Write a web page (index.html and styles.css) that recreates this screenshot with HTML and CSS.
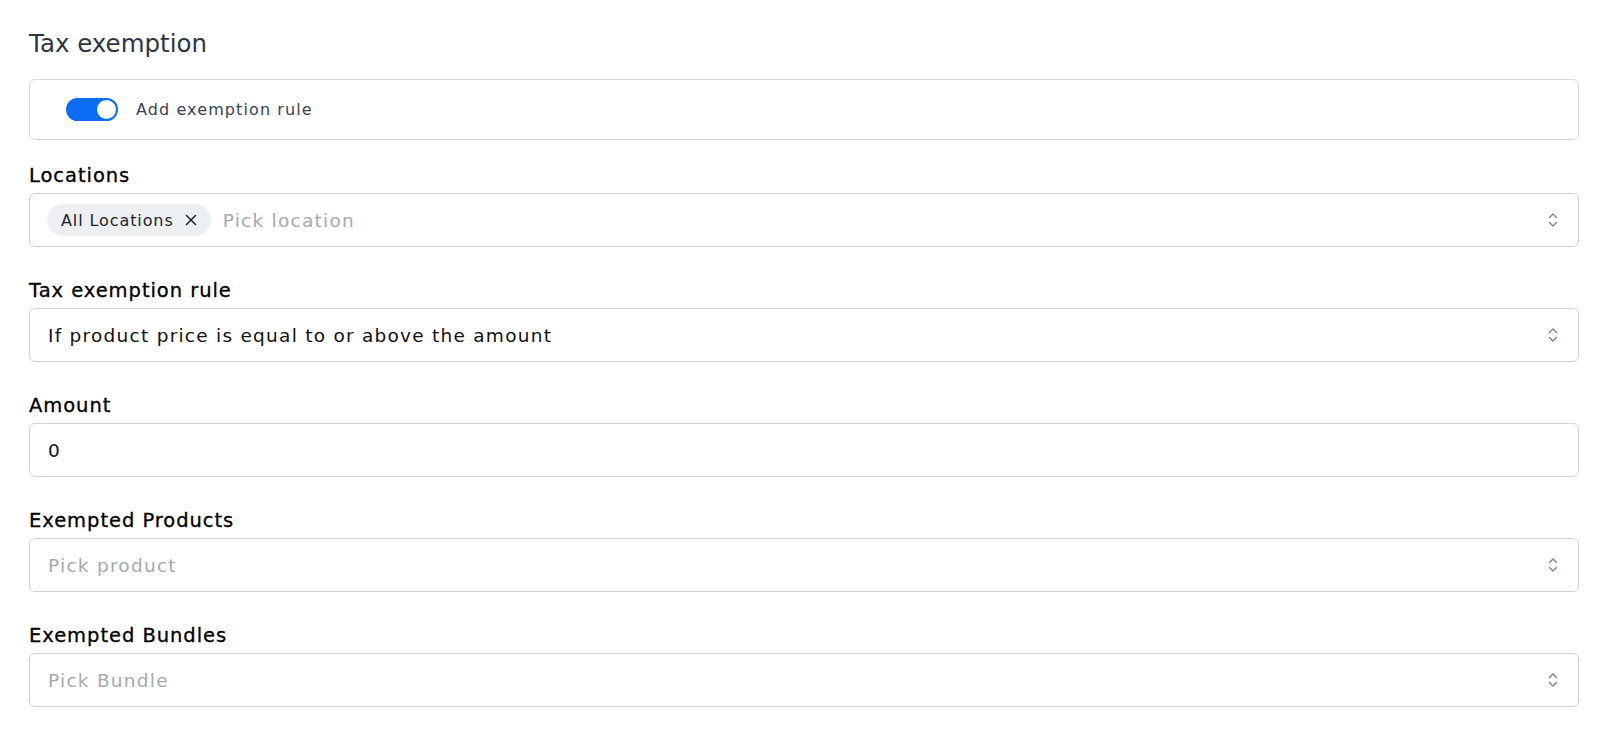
FILE: index.html
```html
<!DOCTYPE html>
<html lang="en">
<head>
    <meta charset="UTF-8">
    <meta name="viewport" content="width=device-width, initial-scale=1.0">
    <title>Tax exemption</title>
    <link rel="stylesheet" href="styles.css">
</head>
<body>
    <div class="page">
        <h2 class="title">Tax exemption</h2>

        <div class="toggle-card">
            <span class="switch on"><span class="knob"></span></span>
            <span class="toggle-label">Add exemption rule</span>
        </div>

        <div class="field">
            <label class="label">Locations</label>
            <div class="input select">
                <div class="values">
                    <span class="chip">All Locations
                        <svg class="chip-x" width="12" height="12" viewBox="0 0 12 12"><path d="M1.5 1.5l9 9M10.5 1.5l-9 9" stroke="#1f2328" stroke-width="1.5" stroke-linecap="round"/></svg>
                    </span>
                    <span class="placeholder">Pick location</span>
                </div>
                <svg class="chevron" width="10" height="16" viewBox="0 0 10 16"><path d="M1.5 5.5L5 2l3.5 3.5M1.5 10.5L5 14l3.5-3.5" fill="none" stroke="#7b838d" stroke-width="1.4" stroke-linecap="round" stroke-linejoin="round"/></svg>
            </div>
        </div>

        <div class="field">
            <label class="label">Tax exemption rule</label>
            <div class="input select">
                <span class="value">If product price is equal to or above the amount</span>
                <svg class="chevron" width="10" height="16" viewBox="0 0 10 16"><path d="M1.5 5.5L5 2l3.5 3.5M1.5 10.5L5 14l3.5-3.5" fill="none" stroke="#7b838d" stroke-width="1.4" stroke-linecap="round" stroke-linejoin="round"/></svg>
            </div>
        </div>

        <div class="field">
            <label class="label">Amount</label>
            <div class="input">
                <span class="value">0</span>
            </div>
        </div>

        <div class="field">
            <label class="label">Exempted Products</label>
            <div class="input select">
                <span class="placeholder">Pick product</span>
                <svg class="chevron" width="10" height="16" viewBox="0 0 10 16"><path d="M1.5 5.5L5 2l3.5 3.5M1.5 10.5L5 14l3.5-3.5" fill="none" stroke="#7b838d" stroke-width="1.4" stroke-linecap="round" stroke-linejoin="round"/></svg>
            </div>
        </div>

        <div class="field">
            <label class="label">Exempted Bundles</label>
            <div class="input select">
                <span class="placeholder">Pick Bundle</span>
                <svg class="chevron" width="10" height="16" viewBox="0 0 10 16"><path d="M1.5 5.5L5 2l3.5 3.5M1.5 10.5L5 14l3.5-3.5" fill="none" stroke="#7b838d" stroke-width="1.4" stroke-linecap="round" stroke-linejoin="round"/></svg>
            </div>
        </div>
    </div>
</body>
</html>
```

FILE: styles.css
```css
body {
    margin: 0;
    background: #ffffff;
    font-family: 'DejaVu Sans', 'Noto Sans', sans-serif;
    color: #111111;
}
.page {
    padding: 28px 25px 0 29px;
}
.title {
    margin: 0 0 19px 0;
    font-size: 24.5px;
    line-height: 32px;
    font-weight: 400;
    color: #2d3645;
}
.toggle-card {
    display: flex;
    align-items: center;
    gap: 18px;
    height: 59px;
    padding: 0 36px;
    border: 1px solid #d3d7dc;
    border-radius: 6px;
    margin-bottom: 22px;
}
.switch {
    display: flex;
    align-items: center;
    width: 52px;
    height: 23px;
    border-radius: 12px;
    background: #d1d5db;
    padding: 0 2px;
    box-sizing: border-box;
}
.switch.on {
    background: #0a6cf7;
    justify-content: flex-end;
}
.knob {
    width: 19px;
    height: 19px;
    border-radius: 50%;
    background: #ffffff;
}
.toggle-label {
    font-size: 16px;
    letter-spacing: 1.1px;
    color: #3a4250;
}
.field {
    margin-bottom: 30px;
}
.label {
    display: block;
    font-size: 19.5px;
    line-height: 28px;
    letter-spacing: 0.95px;
    margin-bottom: 3px;
    color: #000000;
    -webkit-text-stroke: 0.3px #000000;
}
.input {
    display: flex;
    align-items: center;
    justify-content: space-between;
    height: 54px;
    box-sizing: border-box;
    padding: 0 20px 0 18px;
    border: 1px solid #ced3d9;
    border-radius: 6px;
    font-size: 18.5px;
    letter-spacing: 1.25px;
}
.values {
    display: flex;
    align-items: center;
    gap: 12px;
}
.chip {
    display: flex;
    align-items: center;
    gap: 11px;
    height: 32px;
    padding: 0 14px 0 14px;
    margin-left: -1px;
    border-radius: 16px;
    background: #edf0f3;
    font-size: 16px;
    letter-spacing: 0.9px;
    color: #1f2328;
}
.chip-x {
    display: block;
}
.placeholder {
    color: #a3aab3;
}
.value {
    color: #111111;
}
.chevron {
    display: block;
}
```
